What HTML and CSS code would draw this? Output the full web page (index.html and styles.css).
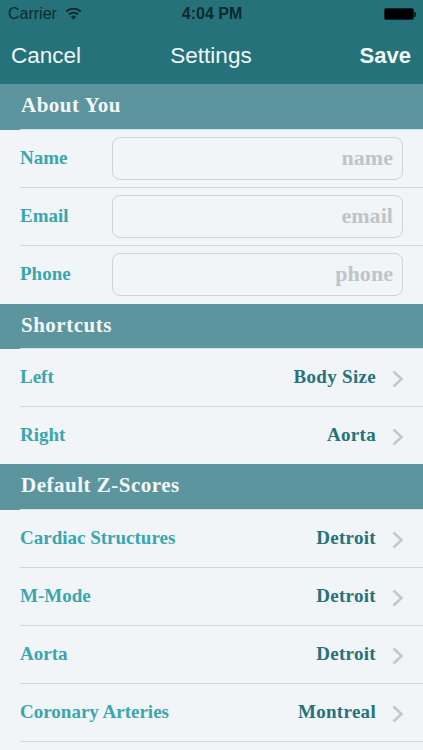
FILE: index.html
```html
<!DOCTYPE html>
<html lang="en">
<head>
<meta charset="utf-8">
<title>Settings</title>
<link rel="stylesheet" href="styles.css">
</head>
<body>
<div class="phone">
  <header class="top">
    <div class="status">
      <div class="status-left">
        <span>Carrier</span>
        <svg class="wifi" width="17" height="12" viewBox="0 0 17 12"><path d="M8.5 11.8 5.9 8.8a3.8 3.8 0 0 1 5.2 0z" fill="#0c2a2e"/><path d="M3.8 6.4a7 7 0 0 1 9.4 0M1.2 3.5a10.8 10.8 0 0 1 14.6 0" fill="none" stroke="#0c2a2e" stroke-width="1.8"/></svg>
      </div>
      <div class="clock">4:04 PM</div>
      <div class="status-right">
        <span class="battery"></span><span class="battery-tip"></span>
      </div>
    </div>
    <nav class="nav">
      <span class="nav-side">Cancel</span>
      <span class="nav-title">Settings</span>
      <span class="nav-side nav-save">Save</span>
    </nav>
  </header>

  <h2 class="section">About You</h2>
  <div class="row form-row"><label class="label">Name</label><div class="field">name</div></div>
  <div class="row form-row"><label class="label">Email</label><div class="field">email</div></div>
  <div class="row form-row last"><label class="label">Phone</label><div class="field">phone</div></div>

  <h2 class="section slim">Shortcuts</h2>
  <div class="row"><span class="label">Left</span><span class="value">Body Size</span><svg class="chev" width="12" height="18" viewBox="0 0 12 18"><path d="M1.5 1.5l8 7.5-8 7.5" /></svg></div>
  <div class="row last short"><span class="label">Right</span><span class="value">Aorta</span><svg class="chev" width="12" height="18" viewBox="0 0 12 18"><path d="M1.5 1.5l8 7.5-8 7.5" /></svg></div>

  <h2 class="section">Default Z-Scores</h2>
  <div class="row"><span class="label">Cardiac Structures</span><span class="value">Detroit</span><svg class="chev" width="12" height="18" viewBox="0 0 12 18"><path d="M1.5 1.5l8 7.5-8 7.5" /></svg></div>
  <div class="row"><span class="label">M-Mode</span><span class="value">Detroit</span><svg class="chev" width="12" height="18" viewBox="0 0 12 18"><path d="M1.5 1.5l8 7.5-8 7.5" /></svg></div>
  <div class="row"><span class="label">Aorta</span><span class="value">Detroit</span><svg class="chev" width="12" height="18" viewBox="0 0 12 18"><path d="M1.5 1.5l8 7.5-8 7.5" /></svg></div>
  <div class="row"><span class="label">Coronary Arteries</span><span class="value">Montreal</span><svg class="chev" width="12" height="18" viewBox="0 0 12 18"><path d="M1.5 1.5l8 7.5-8 7.5" /></svg></div>
</div>
</body>
</html>
```

FILE: styles.css
```css
* { box-sizing: border-box; }
html, body { margin: 0; padding: 0; }
body { width: 423px; height: 750px; overflow: hidden; background: #f1f5f7; }
.phone { width: 423px; height: 750px; overflow: hidden; background: #f1f5f7; font-family: "Liberation Serif", serif; }

.top { height: 84px; background: #26727a; font-family: "Liberation Sans", sans-serif; }
.status { height: 27px; display: grid; grid-template-columns: 1fr auto 1fr; align-items: center; padding: 1px 7px 0 8px; color: #0c2a2e; font-size: 16px; }
.status-left { display: flex; align-items: center; gap: 8px; }
.clock { font-weight: bold; font-size: 16px; }
.status-right { display: flex; align-items: center; justify-content: flex-end; }
.battery { width: 30px; height: 12px; background: #000; border-radius: 2px; border: 1px solid #123; }
.battery-tip { width: 2px; height: 5px; background: #0c2a2e; border-radius: 0 1px 1px 0; }
.nav { height: 57px; display: grid; grid-template-columns: 1fr auto 1fr; align-items: center; padding: 0 12px 0 11px; color: #f0f7f7; font-size: 22.5px; }
.nav-save { font-weight: bold; text-align: right; font-size: 22px; }

.section { margin: 0; height: 46px; display: flex; align-items: center; padding: 0 0 3px 21px; background: linear-gradient(#d5e3e6, #d5e3e6) 20px 100% / 100% 1px no-repeat #5c959d; color: #f4f8f8; font-size: 21px; font-weight: bold; letter-spacing: 0.5px; }
.section.slim { height: 45px; }

.row { height: 58px; margin-left: 20px; padding-right: 19px; display: flex; align-items: center; border-bottom: 1px solid #d0d5d8; font-size: 19px; font-weight: bold; }
.row.last { border-bottom-color: transparent; }
.row.short { height: 57px; border-bottom: 0; }
.label { color: #3aa6b0; padding-bottom: 1px; }
.form-row .label { width: 92px; flex: none; }
.field { width: 291px; height: 43px; flex: none; display: flex; align-items: center; justify-content: flex-end; padding: 0 9px 2px 0; border: 1px solid #ced3d6; border-radius: 8px; color: #bfc4c7; font-size: 22px; letter-spacing: 0.05px; }
.value { margin-left: auto; color: #26727a; padding-bottom: 1px; letter-spacing: 0.3px; }
.chev { margin: 2px 0 0 16px; flex: none; }
.chev path { fill: none; stroke: #c4c8cb; stroke-width: 2.6; }
```
